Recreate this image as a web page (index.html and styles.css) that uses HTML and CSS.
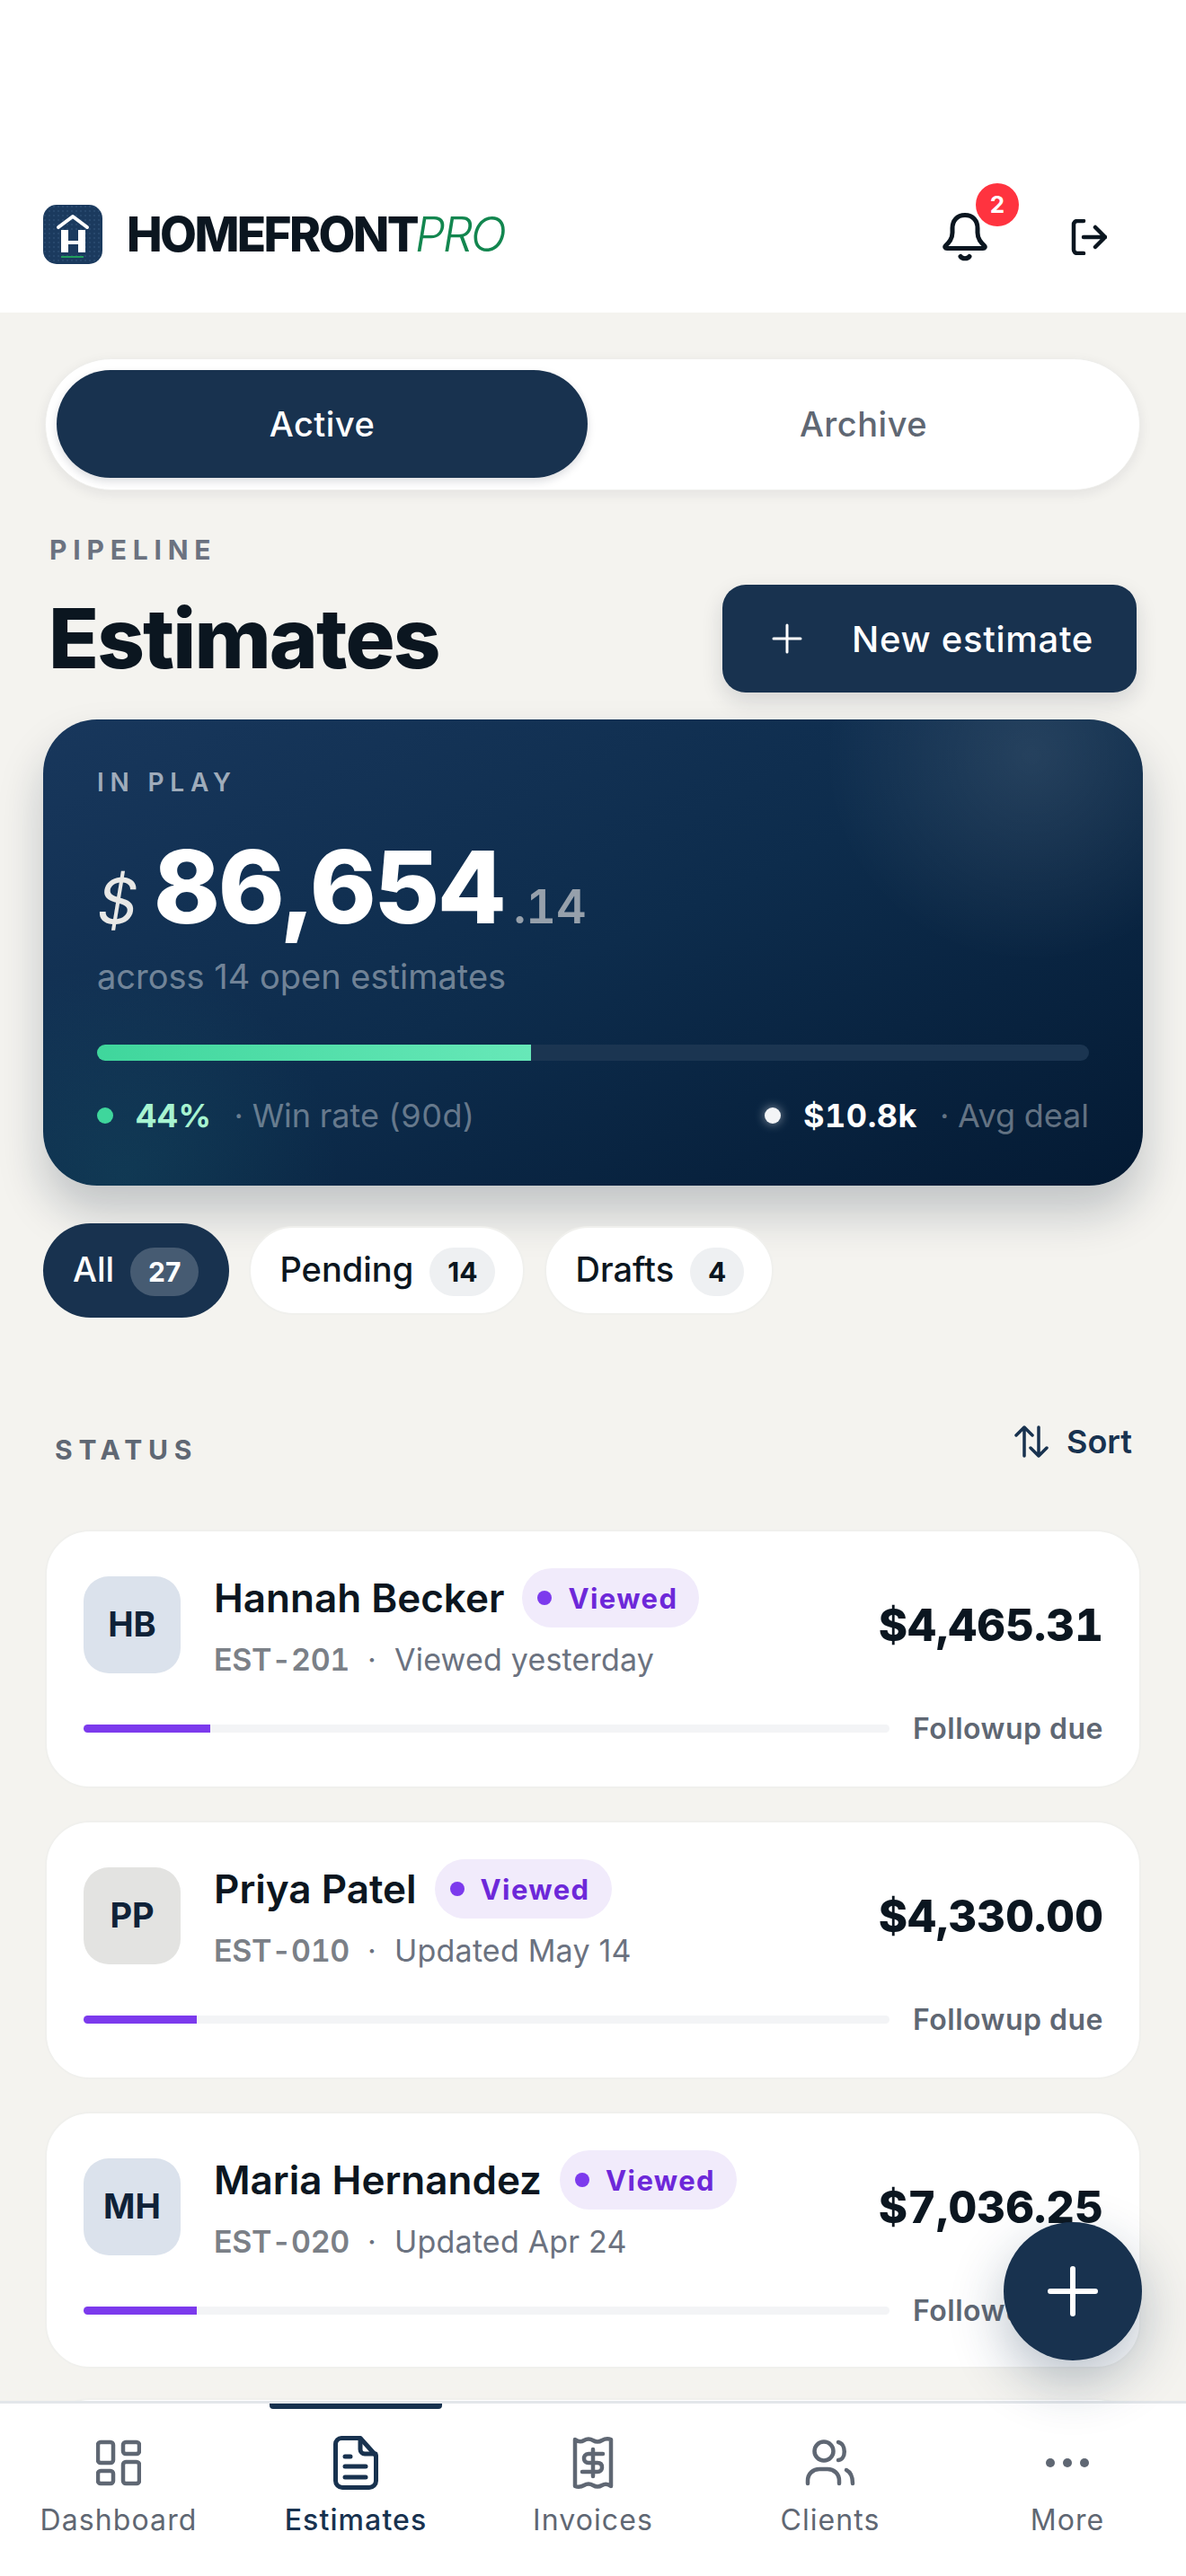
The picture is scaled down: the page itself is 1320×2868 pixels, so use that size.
FILE: index.html
```html
<!DOCTYPE html>
<html lang="en">
<head>
  <meta charset="UTF-8">
  <title>Estimates</title>
  <link rel="stylesheet" href="styles.css">
</head>
<body>
<div class="app">
  <header class="topbar">
    <div class="brand">
      <svg class="brand-mark" viewBox="0 0 66 66">
        <defs>
          <pattern id="dots" width="5" height="5" patternUnits="userSpaceOnUse"><circle cx="2" cy="2" r="0.7" fill="#3d5f86"/></pattern>
        </defs>
        <rect width="66" height="66" rx="15" fill="#1b3a5e"/>
        <rect width="66" height="66" rx="15" fill="url(#dots)"/>
        <path d="M17 25 L33 13 L49 25" fill="none" stroke="#fff" stroke-width="4" stroke-linecap="round" stroke-linejoin="round"/>
        <rect x="20" y="28" width="27" height="25" fill="#fff"/>
        <rect x="28" y="28" width="11" height="12" fill="#1b3a5e"/>
        <rect x="28" y="44" width="11" height="9" fill="#1b3a5e"/>
        <rect x="20" y="57" width="25" height="2" fill="#1f9d5c"/>
      </svg>
      <span class="brand-name">HOMEFRONT<em>PRO</em></span>
    </div>
    <div class="top-actions">
      <div class="bell">
        <svg width="50" height="54" viewBox="0 0 50 54" fill="none" stroke="#0b1620" stroke-width="5" stroke-linecap="round" stroke-linejoin="round">
          <path d="M25 2.5C16 2.5 11 9 11 17V22C11 29 7 33 3.5 36.500C2 38 3 39.500 5 39.500H45C47 39.500 48 38 46.500 36.500C43 33 39 29 39 22V17C39 9 34 2.500 25 2.500Z"/>
          <path d="M20 48.500C22 51.500 28 51.500 30 48.500"/>
        </svg>
        <span class="bell-count">2</span>
      </div>
      <svg class="logout" width="40" height="40" viewBox="0 0 40 40" fill="none" stroke="#0b1620" stroke-width="4.500" stroke-linecap="round" stroke-linejoin="round">
        <path d="M14 2H7A4 4 0 0 0 3 6V34A4 4 0 0 0 7 38H14"/>
        <path d="M14 20H38M27 9L38 20L27 31"/>
      </svg>
    </div>
  </header>

  <main class="content">
    <div class="seg">
      <div class="seg-item seg-on">Active</div>
      <div class="seg-item">Archive</div>
    </div>

    <p class="eyebrow">PIPELINE</p>
    <div class="title-row">
      <h1>Estimates</h1>
      <div class="new-btn">
        <svg width="34" height="34" viewBox="0 0 34 34" stroke="#fff" stroke-width="3" stroke-linecap="round"><path d="M17 2V32M2 17H32"/></svg>
        <span>New estimate</span>
      </div>
    </div>

    <section class="hero">
      <p class="hero-label">IN PLAY</p>
      <div class="hero-total">
        <span class="hero-cur">$</span>
        <span class="hero-num">86,654</span>
        <span class="hero-cents">.14</span>
      </div>
      <p class="hero-sub">across 14 open estimates</p>
      <div class="hero-bar"><div class="hero-fill" style="width:43.75%"></div></div>
      <div class="hero-stats">
        <div class="stat"><i class="stat-dot stat-dot-green"></i><b class="stat-green">44%</b><span>· Win rate (90d)</span></div>
        <div class="stat"><i class="stat-dot stat-dot-white"></i><b>$10.8k</b><span>· Avg deal</span></div>
      </div>
    </section>

    <div class="chips">
      <div class="chip chip-on">All <span class="chip-count">27</span></div>
      <div class="chip">Pending <span class="chip-count">14</span></div>
      <div class="chip">Drafts <span class="chip-count">4</span></div>
    </div>

    <div class="status-head">
      <span class="status-label">STATUS</span>
      <div class="sort">
        <svg width="38" height="36" viewBox="0 0 38 36" fill="none" stroke="#18324f" stroke-width="3.500" stroke-linecap="round" stroke-linejoin="round">
          <path d="M11 34V2M2 11L11 2L20 11"/>
          <path d="M27 2V34M18 25L27 34L36 25"/>
        </svg>
        <span>Sort</span>
      </div>
    </div>

    <div class="est-list">
      <article class="est-card">
        <div class="est-top">
          <div class="avatar">HB</div>
          <div class="est-info">
            <div class="est-name-row"><span class="est-name">Hannah Becker</span><span class="pill"><i></i>Viewed</span></div>
            <div class="est-sub"><b>EST-201</b><i>·</i><span>Viewed yesterday</span></div>
          </div>
          <div class="est-amount">$4,465.31</div>
        </div>
        <div class="est-foot">
          <div class="track"><div class="track-fill" style="width:141px"></div></div>
          <span class="est-due">Followup due</span>
        </div>
      </article>

      <article class="est-card">
        <div class="est-top">
          <div class="avatar avatar-grey">PP</div>
          <div class="est-info">
            <div class="est-name-row"><span class="est-name">Priya Patel</span><span class="pill"><i></i>Viewed</span></div>
            <div class="est-sub"><b>EST-010</b><i>·</i><span>Updated May 14</span></div>
          </div>
          <div class="est-amount">$4,330.00</div>
        </div>
        <div class="est-foot">
          <div class="track"><div class="track-fill" style="width:126px"></div></div>
          <span class="est-due">Followup due</span>
        </div>
      </article>

      <article class="est-card est-card-short">
        <div class="est-top">
          <div class="avatar">MH</div>
          <div class="est-info">
            <div class="est-name-row"><span class="est-name">Maria Hernandez</span><span class="pill"><i></i>Viewed</span></div>
            <div class="est-sub"><b>EST-020</b><i>·</i><span>Updated Apr 24</span></div>
          </div>
          <div class="est-amount">$7,036.25</div>
        </div>
        <div class="est-foot">
          <div class="track"><div class="track-fill" style="width:126px"></div></div>
          <span class="est-due">Followup due</span>
        </div>
      </article>

      <article class="est-card est-card-peek"></article>
    </div>
  </main>

  <nav class="tabs">
    <div class="tab">
      <svg width="50" height="60" viewBox="0 0 50 60" fill="none" stroke="#5f6773" stroke-width="4.500">
        <rect x="2" y="7" width="17" height="23" rx="3"/>
        <rect x="30" y="7" width="18" height="13" rx="3"/>
        <rect x="2" y="39" width="17" height="14" rx="3"/>
        <rect x="30" y="29" width="18" height="24" rx="3"/>
      </svg>
      <span>Dashboard</span>
    </div>
    <div class="tab tab-on">
      <svg width="50" height="60" viewBox="0 0 50 60" fill="none" stroke="#18324f" stroke-width="5" stroke-linecap="round" stroke-linejoin="round">
        <path d="M9 2.500H30L47.500 22V50A7.500 7.500 0 0 1 40 57.500H10A7.500 7.500 0 0 1 2.500 50V9A6.500 6.500 0 0 1 9 2.500Z"/>
        <path d="M30 3V15A5 5 0 0 0 35 20H47"/>
        <path d="M13 23H19M13 34H36M13 46H36"/>
      </svg>
      <span>Estimates</span>
    </div>
    <div class="tab">
      <svg width="46" height="60" viewBox="0 0 46 60" fill="none" stroke="#5f6773" stroke-width="4.500" stroke-linecap="round" stroke-linejoin="round">
        <path d="M3 4Q8 8 13 5T23 5T33 5T43 4V56Q38 52 33 55T23 55T13 55T3 56Z"/>
        <path d="M34 20H18C14 20 13 23 13 25C13 28 15 30 18 30H28C32 30 33 32 33 35C33 38 31 40 28 40H11M23 15V45"/>
      </svg>
      <span>Invoices</span>
    </div>
    <div class="tab">
      <svg width="56" height="60" viewBox="0 0 56 60" fill="none" stroke="#5f6773" stroke-width="4.500" stroke-linecap="round" stroke-linejoin="round">
        <circle cx="21" cy="17" r="10.500"/>
        <path d="M37 7C46 9 46 26 37 27"/>
        <path d="M3 53V50C3 42 9 37 16 37H25C32 37 38 42 38 50V53"/>
        <path d="M46 38C50 40 53 44 53 53"/>
      </svg>
      <span>Clients</span>
    </div>
    <div class="tab">
      <svg width="50" height="60" viewBox="0 0 50 60" fill="#5f6773">
        <circle cx="6" cy="30" r="5"/><circle cx="25" cy="30" r="5"/><circle cx="44" cy="30" r="5"/>
      </svg>
      <span>More</span>
    </div>
  </nav>

  <div class="fab">
    <svg width="56" height="56" viewBox="0 0 56 56" stroke="#fff" stroke-width="6" stroke-linecap="round"><path d="M28 3V53M3 28H53"/></svg>
  </div>
</div>
</body>
</html>
```

FILE: styles.css
```css
* {
  box-sizing: border-box;
}
html, body {
  margin: 0;
  padding: 0;
}
body {
  font-family: Inter, "Liberation Sans", sans-serif;
  color: #0b1620;
}
p, h1 {
  margin: 0;
}
.app {
  position: relative;
  width: 1320px;
  height: 2868px;
  display: flex;
  flex-direction: column;
  overflow: hidden;
  background: #f4f3ef;
}

/* top bar */
.topbar {
  height: 348px;
  flex: none;
  background: #fff;
  padding: 228px 88px 0 48px;
  display: flex;
  justify-content: space-between;
  align-items: flex-start;
}
.brand {
  display: flex;
  align-items: center;
  gap: 27px;
}
.brand-mark {
  width: 66px;
  height: 66px;
}
.brand-name {
  font-size: 53px;
  font-weight: 800;
  letter-spacing: -2.6px;
  line-height: 66px;
}
.brand-name em {
  font-weight: 300;
  color: #12864f;
  margin-left: -2px;
}
.top-actions {
  display: flex;
  align-items: flex-start;
  gap: 93px;
}
.bell {
  position: relative;
  width: 50px;
  height: 54px;
  margin-top: 9px;
}
.bell-count {
  position: absolute;
  top: -33px;
  left: 37px;
  width: 48px;
  height: 48px;
  border-radius: 50%;
  background: #ff333f;
  color: #fff;
  font-size: 26px;
  font-weight: 700;
  line-height: 48px;
  text-align: center;
}
.logout {
  margin-top: 16px;
}

.content {
  flex: 1;
  min-height: 0;
  padding: 51px 48px 0;
  overflow: hidden;
}

/* active / archive */
.seg {
  height: 147px;
  margin: 0 3px 0 2px;
  padding: 12px 0 12px 12px;
  display: flex;
  background: #fff;
  border: 1px solid #eeeeeb;
  border-radius: 74px;
  box-shadow: 0 4px 14px rgba(20, 30, 50, 0.08);
}
.seg-item {
  height: 120px;
  line-height: 120px;
  text-align: center;
  font-size: 38px;
  font-weight: 500;
  letter-spacing: 0.5px;
  color: #5f6773;
  border-radius: 60px;
  flex: 1;
}
.seg-on {
  flex: none;
  width: 591px;
  background: #18324f;
  color: #fff;
  box-shadow: 0 4px 10px rgba(20, 30, 50, 0.15);
}

.eyebrow {
  margin: 48px 0 0 7px;
  font-size: 30px;
  line-height: 36px;
  font-weight: 700;
  letter-spacing: 6.8px;
  color: #6b7280;
}
.title-row {
  margin: 21px 7px 0 6px;
  display: flex;
  justify-content: space-between;
  align-items: center;
}
h1 {
  font-size: 92px;
  font-weight: 800;
  letter-spacing: -1.9px;
  line-height: 120px;
  color: #0b1620;
}
.new-btn {
  width: 461px;
  height: 120px;
  padding-left: 55px;
  background: #18324f;
  border-radius: 26px;
  display: flex;
  align-items: center;
  gap: 55px;
  color: #fff;
  font-size: 40px;
  font-weight: 500;
  letter-spacing: 0.7px;
  box-shadow: 0 10px 24px rgba(20, 30, 50, 0.14);
}

/* in play card */
.hero {
  margin-top: 30px;
  height: 519px;
  padding: 52px 60px 0;
  border-radius: 60px;
  color: #fff;
  background:
    radial-gradient(circle 230px at 1100px 40px, rgba(255, 255, 255, 0.1), rgba(255, 255, 255, 0)),
    radial-gradient(circle 240px at 90px 510px, rgba(40, 150, 140, 0.12), rgba(40, 150, 140, 0)),
    linear-gradient(155deg, #18375c 0%, #0d2c4c 50%, #041a33 100%);
  box-shadow: 0 30px 50px rgba(15, 30, 55, 0.22);
}
.hero-label {
  font-size: 28px;
  line-height: 36px;
  font-weight: 600;
  letter-spacing: 6.8px;
  color: rgba(255, 255, 255, 0.6);
}
.hero-total {
  margin-top: 38px;
  height: 120px;
  display: flex;
  align-items: baseline;
  line-height: 120px;
}
.hero-cur {
  font-size: 70px;
  font-style: italic;
  font-weight: 400;
  color: #e8e8e6;
  margin-right: 18px;
}
.hero-num {
  font-size: 112px;
  font-weight: 800;
  letter-spacing: -2.5px;
}
.hero-cents {
  margin-left: 10px;
  font-size: 52px;
  font-weight: 600;
  font-variant-numeric: tabular-nums;
  color: #96a0ab;
}
.hero-sub {
  margin-top: 17px;
  font-size: 38px;
  line-height: 46px;
  color: rgba(255, 255, 255, 0.42);
}
.hero-bar {
  margin-top: 53px;
  height: 18px;
  border-radius: 9px;
  background: #1b3551;
  overflow: hidden;
}
.hero-fill {
  height: 100%;
  background: linear-gradient(90deg, #3fd69c, #67e8b8);
}
.hero-stats {
  margin-top: 39px;
  display: flex;
  justify-content: space-between;
  font-size: 36px;
  line-height: 44px;
  font-variant-numeric: tabular-nums;
}
.stat {
  display: flex;
  align-items: center;
}
.stat b {
  font-weight: 700;
  margin-right: 25px;
  letter-spacing: 0.5px;
}
.stat span {
  color: rgba(255, 255, 255, 0.38);
}
.stat-green {
  color: #a7f3d0;
}
.stat-dot {
  width: 18px;
  height: 18px;
  border-radius: 50%;
  margin-right: 25px;
}
.stat-dot-green {
  background: #3fd69c;
}
.stat-dot-white {
  background: #f3f4f6;
  box-shadow: 0 0 12px rgba(255, 255, 255, 0.55);
}

/* filter chips */
.chips {
  margin-top: 42px;
  display: flex;
  align-items: center;
  gap: 22px;
}
.chip {
  height: 99px;
  padding: 0 31px 4px 32px;
  display: flex;
  align-items: center;
  gap: 18px;
  background: #fff;
  border: 2px solid #f0f0ed;
  border-radius: 50px;
  font-size: 38px;
  font-weight: 500;
  color: #0b1620;
}
.chip-on {
  height: 105px;
  background: #18324f;
  border: 0;
  border-radius: 53px;
  color: #fff;
  padding: 0 34px 4px 33px;
}
.chip-count {
  min-width: 60px;
  height: 54px;
  margin-top: 7px;
  padding: 0 20px;
  border-radius: 27px;
  background: #eef0f2;
  font-size: 30px;
  font-weight: 700;
  line-height: 54px;
  text-align: center;
  color: #0b1620;
}
.chip-on .chip-count {
  background: rgba(255, 255, 255, 0.2);
  color: #fff;
}

.status-head {
  margin: 116px 4px 0 13px;
  height: 53px;
  display: flex;
  justify-content: space-between;
  align-items: flex-start;
}
.status-label {
  margin-top: 9px;
  font-size: 30px;
  line-height: 44px;
  font-weight: 700;
  letter-spacing: 6.8px;
  color: #5f6773;
}
.sort {
  display: flex;
  align-items: center;
  gap: 20px;
  height: 44px;
  margin-right: 8px;
  font-size: 36px;
  font-weight: 600;
  color: #18324f;
}

/* estimate cards */
.est-list {
  margin-top: 67px;
  display: flex;
  flex-direction: column;
  gap: 36px;
}
.est-card {
  margin: 0 2px;
  height: 288px;
  flex: none;
  padding: 41px 40px 0 41px;
  background: #fff;
  border: 2px solid #f0f0ed;
  border-radius: 50px;
}
.est-card-short {
  height: 286px;
}
.est-card-peek {
  margin-top: -3px;
}
.est-top {
  display: flex;
  align-items: flex-start;
}
.avatar {
  width: 108px;
  height: 108px;
  flex: none;
  margin-top: 9px;
  border-radius: 28px;
  background: #dbe2ec;
  color: #0f2238;
  font-size: 38px;
  font-weight: 700;
  line-height: 106px;
  text-align: center;
}
.avatar-grey {
  background: #e3e3e1;
}
.est-info {
  flex: 1;
  margin-left: 37px;
}
.est-name-row {
  display: flex;
  align-items: center;
  gap: 20px;
}
.est-name {
  font-size: 44px;
  font-weight: 600;
  color: #0b1620;
}
.pill {
  height: 66px;
  padding: 0 24px 0 17px;
  display: flex;
  align-items: center;
  gap: 18px;
  border-radius: 33px;
  background: #f1ebfb;
  color: #6d28d9;
  font-size: 31px;
  font-weight: 700;
  letter-spacing: 1.4px;
}
.pill i {
  width: 16px;
  height: 16px;
  border-radius: 50%;
  background: #7c3aed;
}
.est-sub {
  margin-top: 14px;
  display: flex;
  align-items: center;
  font-size: 34px;
  line-height: 44px;
  color: #6b7280;
  letter-spacing: 0.2px;
}
.est-sub b {
  font-weight: 600;
  color: #7b8087;
  letter-spacing: -0.3px;
  font-variant-numeric: tabular-nums;
}
.est-sub i {
  font-style: normal;
  margin: 0 20px;
}
.est-amount {
  margin-top: 34px;
  font-size: 49px;
  line-height: 60px;
  font-weight: 800;
  letter-spacing: 0.2px;
  font-variant-numeric: tabular-nums;
  color: #0b1620;
}
.est-foot {
  margin-top: 36px;
  display: flex;
  align-items: center;
  gap: 26px;
  height: 36px;
}
.track {
  flex: 1;
  height: 9px;
  border-radius: 5px;
  background: #f3f4f6;
  overflow: hidden;
}
.track-fill {
  height: 100%;
  background: #7c3aed;
}
.est-due {
  font-size: 32px;
  font-weight: 600;
  letter-spacing: 0.5px;
  color: #5f6773;
}

/* bottom tabs */
.tabs {
  position: relative;
  height: 195px;
  flex: none;
  padding-top: 36px;
  display: grid;
  grid-template-columns: repeat(5, 1fr);
  background: #fff;
  border-top: 3px solid #e2e6ea;
}
.tab {
  position: relative;
  display: flex;
  flex-direction: column;
  align-items: center;
  gap: 14px;
  font-size: 32px;
  line-height: 40px;
  color: #5f6773;
  letter-spacing: 1.1px;
}
.tab-on {
  color: #18324f;
  font-weight: 500;
}
.tab-on::before {
  content: "";
  position: absolute;
  top: -36px;
  left: 36px;
  width: 192px;
  height: 6px;
  border-radius: 0 0 4px 4px;
  background: #18324f;
}

.fab {
  position: absolute;
  right: 49px;
  bottom: 240px;
  width: 154px;
  height: 154px;
  border-radius: 50%;
  background: #18324f;
  display: flex;
  align-items: center;
  justify-content: center;
  box-shadow: 0 24px 60px rgba(24, 50, 79, 0.3);
}
```
